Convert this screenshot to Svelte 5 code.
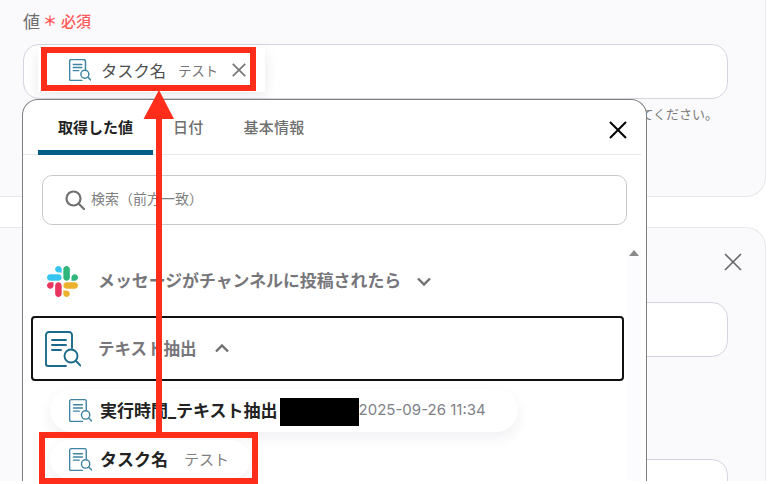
<script>
	const dark = '#1b6a8c';
</script>

{#snippet docIcon(size, color, weight)}
	<svg class="doc" width={size} height={size} viewBox="0 0 36 36" fill="none" stroke={color} stroke-width={weight} stroke-linecap="round" stroke-linejoin="round">
		<path d="M27 17V4a3 3 0 0 0-3-3H4a3 3 0 0 0-3 3v29a2 2 0 0 0 2 2h18" />
		<path d="M7 9h14M7 14h14M7 19h9" />
		<circle cx="26" cy="25" r="6.5" />
		<path d="M31 30l4.5 4.5" />
	</svg>
{/snippet}

{#snippet cross(size, color, weight)}
	<svg width={size} height={size} viewBox="0 0 18 18" fill="none" stroke={color} stroke-width={weight}>
		<path d="M1 1l16 16M17 1L1 17" />
	</svg>
{/snippet}

<div class="page">
	<section class="card first">
		<div class="label"><span class="name">値</span><span class="star">＊</span><span class="req">必須</span></div>
		<div class="field">
			<div class="chip">
				{@render docIcon(22, '#3f84a2', 2.4)}
				<span class="chip-name">タスク名</span>
				<span class="chip-sub">テスト</span>
				<span class="chip-x">{@render cross(14, '#777', 2.2)}</span>
			</div>
		</div>
		<p class="hint">アウトプットを選択するか、値を入力してください。</p>
	</section>

	<section class="card second">
		<div class="card-close">{@render cross(18, '#666', 1.6)}</div>
		<div class="field tall"></div>
		<div class="field next"></div>
	</section>

	<div class="popup">
		<div class="tabs">
			<span class="tab active">取得した値</span>
			<span class="tab">日付</span>
			<span class="tab">基本情報</span>
			<span class="tabs-close">{@render cross(18, '#000', 2)}</span>
		</div>

		<div class="search">
			<svg width="20" height="20" viewBox="0 0 20 20" fill="none" stroke="#707070" stroke-width="2.2">
				<circle cx="8.5" cy="8.5" r="7" />
				<path d="M13.5 13.5l5.5 5.5" stroke-linecap="round" />
			</svg>
			<span class="search-text">検索（前方一致）</span>
		</div>

		<div class="tree">
			<div class="scroll"><i></i></div>

			<div class="node slack">
				<svg width="31" height="31" viewBox="0 0 122.8 122.8">
					<path d="M25.8 77.6c0 7.1-5.8 12.9-12.9 12.9S0 84.7 0 77.6s5.8-12.9 12.9-12.9h12.9v12.9z" fill="#E9365F" />
					<path d="M32.3 77.6c0-7.1 5.8-12.9 12.9-12.9s12.9 5.8 12.9 12.9v32.3c0 7.1-5.8 12.9-12.9 12.9s-12.9-5.8-12.9-12.9V77.6z" fill="#E9365F" />
					<path d="M45.2 25.8c-7.1 0-12.9-5.8-12.9-12.9S38.1 0 45.2 0s12.9 5.8 12.9 12.9v12.9H45.2z" fill="#36C5F0" />
					<path d="M45.2 32.3c7.1 0 12.9 5.8 12.9 12.9s-5.8 12.9-12.9 12.9H12.9C5.8 58.1 0 52.3 0 45.2s5.8-12.9 12.9-12.9h32.3z" fill="#36C5F0" />
					<path d="M97 45.2c0-7.1 5.8-12.9 12.9-12.9s12.9 5.8 12.9 12.9-5.8 12.9-12.9 12.9H97V45.2z" fill="#2EB67D" />
					<path d="M90.5 45.2c0 7.1-5.8 12.9-12.9 12.9s-12.9-5.8-12.9-12.9V12.9C64.7 5.8 70.5 0 77.6 0s12.9 5.8 12.9 12.9v32.3z" fill="#2EB67D" />
					<path d="M77.6 97c7.1 0 12.9 5.8 12.9 12.9s-5.8 12.9-12.9 12.9-12.9-5.8-12.9-12.9V97h12.9z" fill="#ECB22E" />
					<path d="M77.6 90.5c-7.1 0-12.9-5.8-12.9-12.9s5.8-12.9 12.9-12.9h32.3c7.1 0 12.9 5.8 12.9 12.9s-5.8 12.9-12.9 12.9H77.6z" fill="#ECB22E" />
				</svg>
				<span class="node-text">メッセージがチャンネルに投稿されたら</span>
				<svg class="chev" width="14" height="9" viewBox="0 0 14 9" fill="none" stroke="#6f6f6f" stroke-width="2.4"><path d="M1 1.5l6 6 6-6" /></svg>
			</div>

			<div class="node picked">
				{@render docIcon(36, dark, 1.9)}
				<span class="node-text">テキスト抽出</span>
				<svg class="chev" width="14" height="9" viewBox="0 0 14 9" fill="none" stroke="#6f6f6f" stroke-width="2.4"><path d="M1 7.5l6-6 6 6" /></svg>
			</div>

			<div class="pill time">
				{@render docIcon(23, '#3f84a2', 2.2)}
				<span class="pill-name">実行時間_テキスト抽出</span>
				<span class="redact"></span>
				<span class="pill-date">2025-09-26 11:34</span>
			</div>

			<div class="pill task">
				{@render docIcon(23, '#3f84a2', 2.2)}
				<span class="pill-name">タスク名</span>
				<span class="pill-sub">テスト</span>
			</div>
		</div>
	</div>

	<!-- annotation on top of the capture -->
	<div class="mark mark-top"></div>
	<div class="mark mark-bottom"></div>
	<svg class="arrow" width="32" height="344" viewBox="0 0 32 344">
		<path d="M16 0L31 29H19V344H13V29H0.5z" fill="#ff2d1a" />
	</svg>
</div>

<style>
	:global(body) {
		margin: 0;
	}

	.page {
		position: relative;
		width: 777px;
		height: 484px;
		overflow: hidden;
		background: #fff;
		font-family: Inter, "Noto Sans CJK JP", sans-serif;
		color: #333;
	}

	.card {
		box-sizing: border-box;
		width: 786px;
		margin-left: -20px;
		padding-left: 42px;
		padding-right: 37px;
		background: #fafafd;
		border: 1px solid #e7e7ec;
	}

	.first {
		height: 197px;
		padding-top: 7px;
		border-top: none;
		border-radius: 0 0 20px 20px;
	}

	.second {
		height: 254px;
		margin-top: 30px;
		padding-top: 25px;
		border-bottom: none;
		border-radius: 20px 20px 0 0;
		overflow: hidden;
	}

	.label {
		display: flex;
		align-items: center;
		height: 26px;
	}

	.name {
		font-size: 17px;
		color: #6d6d6d;
	}

	.star {
		margin-left: 3px;
		font-size: 14px;
		font-weight: 700;
		color: #ff5a5a;
	}

	.req {
		margin-left: 4px;
		font-size: 15px;
		font-weight: 500;
		color: #ff5a5a;
	}

	.field {
		box-sizing: border-box;
		height: 55px;
		margin-top: 11px;
		background: #fff;
		border: 1px solid #d3d6e0;
		border-radius: 16px;
	}

	.chip {
		display: flex;
		align-items: center;
		width: 227px;
		height: 44px;
		margin: 3px 0 0 14px;
		padding-left: 31px;
		box-sizing: border-box;
		background: #fff;
		box-shadow: 0 4px 12px rgba(40, 40, 80, 0.1);
	}

	.chip-name {
		margin-left: 10px;
		font-size: 16.3px;
		color: #4d4d4d;
	}

	.chip-sub {
		margin-left: 12px;
		font-size: 13.3px;
		color: #777;
	}

	.chip-x {
		display: flex;
		margin-left: 14px;
	}

	.hint {
		margin: 6px 10px 0 0;
		text-align: right;
		font-size: 13px;
		line-height: 18px;
		color: #7a7a7a;
	}

	.card-close {
		display: flex;
		justify-content: flex-end;
		margin-right: -14px;
	}

	.tall {
		margin-top: 31px;
	}

	.next {
		margin-top: 102px;
	}

	.popup {
		position: absolute;
		top: 99px;
		left: 22px;
		box-sizing: border-box;
		width: 625px;
		height: 382px;
		background: #fff;
		border: 1px solid #808080;
		border-bottom: none;
		border-radius: 16px 16px 0 0;
		overflow: hidden;
	}

	.tabs {
		display: flex;
		position: relative;
		box-sizing: border-box;
		height: 55px;
		margin-right: 5px;
		padding-left: 15px;
		border-bottom: 1px solid #e8e8ea;
	}

	.tab {
		box-sizing: border-box;
		height: 55px;
		padding: 16px 20px 0;
		font-size: 15px;
		line-height: 24px;
		font-weight: 500;
		letter-spacing: 0.25px;
		color: #6f6f6f;
	}

	.tab.active {
		width: 115px;
		font-weight: 700;
		letter-spacing: 0;
		color: #222;
		border-bottom: 5px solid #005f86;
		border-radius: 4px 4px 0 0;
		white-space: nowrap;
	}

	.tabs-close {
		display: flex;
		position: absolute;
		top: 21px;
		right: 14px;
	}

	.search {
		display: flex;
		align-items: center;
		gap: 6px;
		box-sizing: border-box;
		width: 585px;
		height: 50px;
		margin: 20px 0 0 19px;
		padding-left: 22px;
		border: 1px solid #c9c9cc;
		border-radius: 10px;
		font-size: 14px;
		color: #808080;
	}

	.search-text {
		margin-bottom: 4px;
	}

	.tree {
		position: relative;
		display: flex;
		flex-direction: column;
		align-items: flex-start;
		margin-top: 31px;
	}

	.scroll {
		position: absolute;
		top: -6px;
		right: 5px;
		bottom: -20px;
		width: 14px;
		background: #fcfbfe;
	}

	.scroll i {
		display: block;
		width: 0;
		margin: 0 auto;
		border: 5px solid transparent;
		border-top: none;
		border-bottom: 6px solid #8a8a8a;
	}

	.node {
		display: flex;
		align-items: center;
		box-sizing: border-box;
	}

	.node-text {
		margin-bottom: 2px;
		font-weight: 700;
		color: #77767b;
		white-space: nowrap;
	}

	.slack {
		height: 50px;
		padding-left: 24px;
	}

	.slack .node-text {
		margin-left: 20px;
		margin-bottom: 4px;
		font-size: 16.9px;
	}

	.slack .chev {
		margin-left: 16px;
	}

	.picked {
		width: 593px;
		height: 65px;
		margin: 10px 0 0 8px;
		padding-left: 12px;
		border: 2px solid #111;
		border-radius: 4px;
	}

	.picked .node-text {
		margin-left: 17px;
		font-size: 16.5px;
	}

	.picked .chev {
		margin-left: 18px;
	}

	.pill {
		display: flex;
		align-items: center;
		box-sizing: border-box;
		margin: 8px 0 0 27px;
		padding-left: 19px;
		background: #fff;
		border-radius: 22px;
		box-shadow: 0 6px 14px rgba(40, 40, 80, 0.07);
	}

	.time {
		width: 468px;
		height: 43px;
	}

	.task {
		width: 200px;
		height: 39px;
	}

	.pill-name {
		margin-bottom: 2px;
		margin-left: 8px;
		font-size: 17px;
		font-weight: 700;
		color: #222;
		white-space: nowrap;
	}

	.redact {
		width: 79px;
		height: 28px;
		margin-top: 3px;
		margin-left: 2px;
		background: #000;
	}

	.pill-date {
		margin-bottom: 2px;
		font-size: 15px;
		color: #808088;
	}

	.pill-sub {
		margin-bottom: 2px;
		margin-left: 16px;
		font-size: 15px;
		color: #808080;
	}

	.mark {
		position: absolute;
		box-sizing: border-box;
		border: 6px solid #ff2d1a;
	}

	.mark-top {
		top: 47px;
		left: 41px;
		width: 215px;
		height: 44px;
	}

	.mark-bottom {
		top: 432px;
		left: 39px;
		width: 219px;
		height: 52px;
	}

	.arrow {
		position: absolute;
		top: 90px;
		left: 143px;
	}
</style>
